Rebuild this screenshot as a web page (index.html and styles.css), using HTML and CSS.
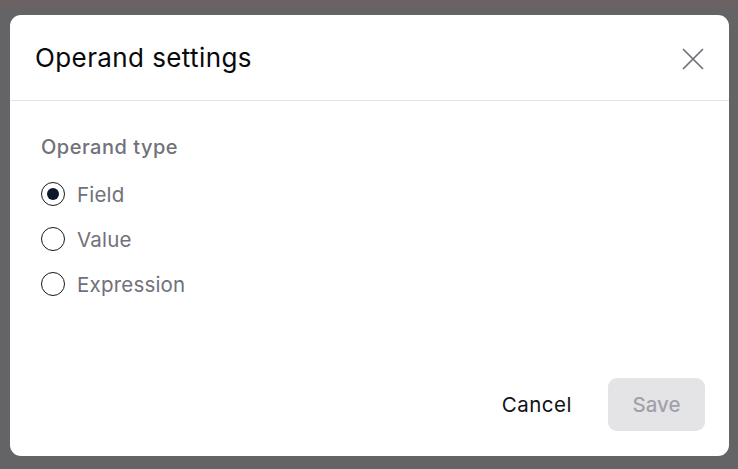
FILE: index.html
```html
<!DOCTYPE html>
<html lang="en">
<head>
<meta charset="utf-8">
<title>Operand settings</title>
<link rel="stylesheet" href="styles.css">
</head>
<body>
<div class="topstrip"></div>
<div class="backdrop">
  <div class="modal">
    <div class="modal-header">
      <h2 class="modal-title">Operand settings</h2>
      <button class="close-btn" aria-label="Close">
        <svg width="22" height="22" viewBox="0 0 22 22" fill="none" stroke="currentColor" stroke-width="1.7" stroke-linecap="round">
          <path d="M1.5 1.5 L20.5 20.5 M20.5 1.5 L1.5 20.5"/>
        </svg>
      </button>
    </div>
    <div class="modal-body">
      <div class="group-label">Operand type</div>
      <div class="radio-list">
        <label class="radio-row"><span class="radio checked"><span class="dot"></span></span><span class="radio-text">Field</span></label>
        <label class="radio-row"><span class="radio"></span><span class="radio-text">Value</span></label>
        <label class="radio-row"><span class="radio"></span><span class="radio-text">Expression</span></label>
      </div>
    </div>
    <div class="modal-footer">
      <button class="btn btn-cancel">Cancel</button>
      <button class="btn btn-save" disabled>Save</button>
    </div>
  </div>
</div>
</body>
</html>
```

FILE: styles.css
```css
* { box-sizing: border-box; }
html, body {
  margin: 0;
  padding: 0;
  height: 100%;
  background: #646467;
  font-family: Inter, "Noto Sans", "Liberation Sans", sans-serif;
}
.topstrip {
  height: 6px;
  background: #6a6366;
  border-bottom: 1px solid #7c5a5e;
}
.backdrop {
  padding: 9px 9px 0 10px;
}
.modal {
  width: 719px;
  height: 441px;
  background: #ffffff;
  border-radius: 11px;
  display: flex;
  flex-direction: column;
}
.modal-header {
  height: 86px;
  display: flex;
  align-items: center;
  justify-content: space-between;
  padding: 0 25px 0 25px;
  border-bottom: 1px solid #e4e4e7;
}
.modal-title {
  margin: 0;
  font-size: 26px;
  font-weight: 400;
  letter-spacing: 0.4px;
  color: #09090b;
}
.close-btn {
  border: 0;
  background: none;
  padding: 0;
  color: #6e6e78;
  display: flex;
  margin-top: 2px;
  cursor: pointer;
}
.modal-body {
  flex: 1;
  padding: 34px 31px 0 31px;
}
.group-label {
  font-size: 20px;
  line-height: 24px;
  font-weight: 500;
  letter-spacing: 0.5px;
  color: #71717a;
}
.radio-list {
  margin-top: 23px;
  display: flex;
  flex-direction: column;
  gap: 21px;
}
.radio-row {
  display: flex;
  align-items: center;
  gap: 12px;
  height: 24px;
}
.radio {
  width: 24px;
  height: 24px;
  border-radius: 50%;
  border: 1.5px solid #18181b;
  display: flex;
  align-items: center;
  justify-content: center;
}
.dot {
  width: 12px;
  height: 12px;
  border-radius: 50%;
  background: #0f172a;
}
.radio-text {
  font-size: 20.5px;
  letter-spacing: 0.2px;
  color: #71717a;
}
.modal-footer {
  display: flex;
  justify-content: flex-end;
  align-items: center;
  gap: 18px;
  padding: 0 24px 25px 0;
}
.btn {
  font-family: inherit;
  font-size: 20.5px;
  font-weight: 500;
  border: 0;
  border-radius: 9px;
  height: 53px;
  padding: 0 24px;
}
.btn-cancel {
  background: none;
  color: #111113;
  font-weight: 400;
  padding: 0 18px;
  letter-spacing: 0.5px;
}
.btn-save {
  width: 97px;
  background: #e4e4e7;
  color: #a1a1aa;
}
```
